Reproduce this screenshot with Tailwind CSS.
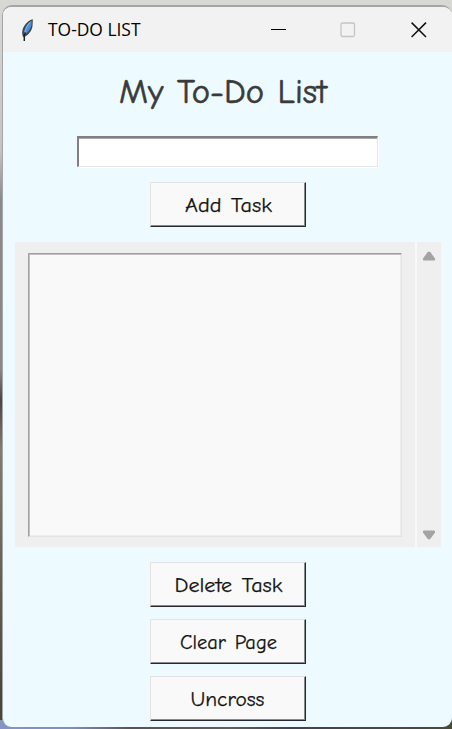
<!DOCTYPE html>
<html lang="en">
<head>
<meta charset="utf-8">
<title>TO-DO LIST</title>
<script src="https://cdn.jsdelivr.net/npm/@tailwindcss/browser@4"></script>
</head>
<body class="w-[452px] h-[729px] overflow-hidden pt-[5px] pl-[2px] bg-[#cfd0cc] bg-[linear-gradient(to_right,#8494c4_0px,#8290bd_70px,#5a5356_130px,#645c5b_230px,#454050_290px,#4c4844_400px,#4b4a32_452px),linear-gradient(to_bottom,#d8d9d5_0px,#c4c4c1_150px,#8c8a88_200px,#8b8583_370px,#4c4644_400px,#857b76_450px,#6b625e_560px,#4b4340_700px)] bg-[length:100%_9px,100%_100%] bg-[position:0_720px,0_0] bg-no-repeat">
<main class="w-[450px] h-[722px] rounded-t-[10px] rounded-b-[9px] overflow-hidden border-t-2 border-l border-[#a5a5a5] bg-[#edfaff] flex flex-col">
  <header class="h-[45px] shrink-0 bg-[#f2f2f2] flex items-center pl-[17px]">
    <svg class="w-[16px] h-[26px] shrink-0" viewBox="0 0 16 26">
      <path d="M12.8 2.3C8 3 3.2 8.8 2.3 14c-.3 2 0 4 .7 6l1.4-.2C8.8 18 12 13.4 12.5 9c.3-2.4.2-4.7.3-6.7z" fill="#3f464e"/>
      <path d="M11.7 3.7C8.6 5.2 5.6 9 4.6 13.5c-.4 1.7-.4 3.2-.1 4.5C8 15.800 10.700 11.500 11.400 8.500z" fill="#4b8fdc"/>
      <path d="M10 5.500C7.500 8 5.500 12 4.800 15" stroke="#a6c4e4" stroke-width=".8" fill="none"/>
      <path d="M5.500 15.500L4.300 18.500V24" stroke="#1f2328" stroke-width="1.500" fill="none"/>
    </svg>
    <h1 class="ml-[12px] w-[96px] h-[26px]">
      <svg class="w-[96px] h-[26px] overflow-visible"><text x="0" y="18.500" textLength="92.500" lengthAdjust="spacingAndGlyphs" class="font-['Segoe_UI','Open_Sans',sans-serif] text-[18px] fill-black">TO-DO LIST</text></svg>
    </h1>
    <svg class="ml-[127px] w-[16px] h-[16px]" viewBox="0 0 16 16"><path d="M0 7.500H15" stroke="#000"/></svg>
    <svg class="ml-[53px] w-[16px] h-[16px]" viewBox="0 0 16 16"><rect x="1" y="1" width="13.500" height="13.500" rx="1.500" fill="none" stroke="#c4c4c4" stroke-width="1.300"/></svg>
    <svg class="ml-[55px] w-[16px] h-[16px]" viewBox="0 0 16 16"><path d="M.6.600L15 15M15 .6L.6 15" stroke="#111" stroke-width="1.500"/></svg>
  </header>

  <h2 class="mt-[18px] ml-[115px] w-[212px] h-[44px] shrink-0">
    <svg class="w-[212px] h-[44px] overflow-visible"><text x="1" y="33" textLength="208" lengthAdjust="spacingAndGlyphs" class="font-['Comic_Sans_MS','Comic_Neue','Lato',sans-serif] text-[34px] [word-spacing:2px] fill-[#3a3a3a] stroke-[#3a3a3a] stroke-[0.6px]">My To-Do List</text></svg>
  </h2>

  <div class="mt-[22px] ml-[74px] w-[301px] h-[31px] shrink-0 bg-white border-t-2 border-l-2 border-r border-b border-t-[#808080] border-l-[#808080] border-r-[#e6e6e6] border-b-[#e6e6e6] shadow-[inset_0_1px_0_#a8a8a8,1px_1px_0_#ffffff]"></div>

  <button class="mt-[15px] ml-[147px] w-[156px] h-[45px] shrink-0 bg-[#f9f9f9] border border-t-[#e3e3e3] border-l-[#e3e3e3] border-r-[#25282c] border-b-[#25282c] shadow-[inset_-1px_-1px_0_#888a8d]">
    <svg class="w-[154px] h-[43px]"><text x="34" y="29" textLength="87" lengthAdjust="spacingAndGlyphs" class="font-['Comic_Sans_MS','Comic_Neue','Lato',sans-serif] text-[21px] [word-spacing:2px] fill-[#111] stroke-[#111] stroke-[0.25px]">Add Task</text></svg>
  </button>

  <section class="mt-[15px] ml-[12px] w-[426px] h-[305px] shrink-0 flex gap-[2px] bg-[#f9f9f9]">
    <div class="w-[400px] bg-[#efefef] pt-[11px] pl-[13px]">
      <div class="w-[374px] h-[284px] bg-[#f9f9f9] border border-t-[#a0a0a0] border-l-[#a0a0a0] border-r-[#e3e3e3] border-b-[#e3e3e3] shadow-[inset_1px_1px_0_#c0c0c0,inset_-1px_-1px_0_#ededed]"></div>
    </div>
    <div class="w-[24px] bg-[#efefef] flex flex-col justify-between items-center pt-[9px] pb-[7px]">
      <svg class="w-[14px] h-[10px]" viewBox="0 0 14 10"><path d="M5.600 1.200Q7 0 8.400 1.200L13 7.500Q13.500 9.500 12 9.500H2Q.5 9.500 1 7.500z" fill="#a3a3a3"/></svg>
      <svg class="w-[14px] h-[10px]" viewBox="0 0 14 10"><path d="M5.600 8.800Q7 10 8.400 8.800L13 2.500Q13.500.5 12 .5H2Q.5.5 1 2.500z" fill="#a3a3a3"/></svg>
    </div>
  </section>

  <div class="mt-[15px] ml-[147px] flex flex-col gap-[12px]">
    <button class="w-[156px] h-[45px] bg-[#f9f9f9] border border-t-[#e3e3e3] border-l-[#e3e3e3] border-r-[#25282c] border-b-[#25282c] shadow-[inset_-1px_-1px_0_#888a8d]">
      <svg class="w-[154px] h-[43px]"><text x="23.500" y="29" textLength="108" lengthAdjust="spacingAndGlyphs" class="font-['Comic_Sans_MS','Comic_Neue','Lato',sans-serif] text-[21px] [word-spacing:2px] fill-[#111] stroke-[#111] stroke-[0.25px]">Delete Task</text></svg>
    </button>
    <button class="w-[156px] h-[45px] bg-[#f9f9f9] border border-t-[#e3e3e3] border-l-[#e3e3e3] border-r-[#25282c] border-b-[#25282c] shadow-[inset_-1px_-1px_0_#888a8d]">
      <svg class="w-[154px] h-[43px]"><text x="29" y="29" textLength="97" lengthAdjust="spacingAndGlyphs" class="font-['Comic_Sans_MS','Comic_Neue','Lato',sans-serif] text-[21px] [word-spacing:2px] fill-[#111] stroke-[#111] stroke-[0.25px]">Clear Page</text></svg>
    </button>
    <button class="w-[156px] h-[45px] bg-[#f9f9f9] border border-t-[#e3e3e3] border-l-[#e3e3e3] border-r-[#25282c] border-b-[#25282c] shadow-[inset_-1px_-1px_0_#888a8d]">
      <svg class="w-[154px] h-[43px]"><text x="39.500" y="29" textLength="74" lengthAdjust="spacingAndGlyphs" class="font-['Comic_Sans_MS','Comic_Neue','Lato',sans-serif] text-[21px] fill-[#111] stroke-[#111] stroke-[0.25px]">Uncross</text></svg>
    </button>
  </div>
</main>
</body>
</html>
